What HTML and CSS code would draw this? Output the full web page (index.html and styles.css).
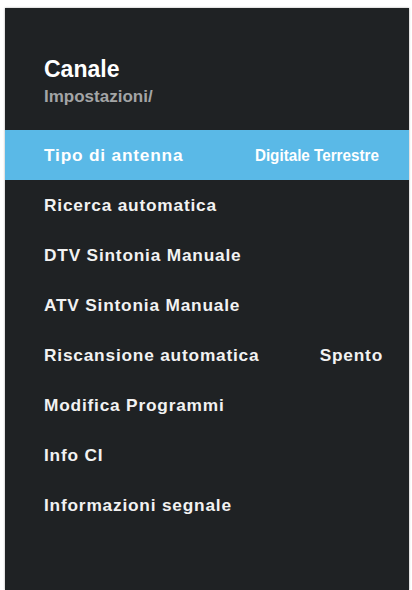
FILE: index.html
```html
<!DOCTYPE html>
<html lang="it">
<head>
    <meta charset="UTF-8">
    <meta name="viewport" content="width=device-width, initial-scale=1.0">
    <title>Canale</title>
    <link rel="stylesheet" href="styles.css">
</head>
<body>
    <div class="panel">
        <div class="header">
            <h1>Canale</h1>
            <div class="crumb">Impostazioni/</div>
        </div>

        <ul class="menu">
            <li class="item selected">
                <span class="label">Tipo di antenna</span>
                <span class="value narrow">Digitale Terrestre</span>
            </li>
            <li class="item"><span class="label">Ricerca automatica</span></li>
            <li class="item"><span class="label">DTV Sintonia Manuale</span></li>
            <li class="item"><span class="label">ATV Sintonia Manuale</span></li>
            <li class="item">
                <span class="label">Riscansione automatica</span>
                <span class="value">Spento</span>
            </li>
            <li class="item"><span class="label">Modifica Programmi</span></li>
            <li class="item"><span class="label">Info CI</span></li>
            <li class="item"><span class="label">Informazioni segnale</span></li>
        </ul>
    </div>
</body>
</html>
```

FILE: styles.css
```css
body {
    margin: 0;
    padding: 8px 3px 0 5px;
    background: #ffffff;
    font-family: "Liberation Sans", Arial, sans-serif;
    overflow: hidden;
}

.panel {
    height: calc(100vh - 8px);
    background: #1f2224;
    box-shadow: 0 0 2px rgba(0, 0, 0, 0.35);
    overflow: hidden;
}

.header {
    padding: 47px 39px 23px;
}

h1 {
    margin: 0;
    font-size: 23px;
    line-height: 28px;
    font-weight: bold;
    color: #ffffff;
}

.crumb {
    margin-top: 4px;
    font-size: 17px;
    line-height: 20px;
    font-weight: bold;
    color: #a3a5a6;
}

.menu {
    list-style: none;
    margin: 0;
    padding: 0;
}

.item {
    display: flex;
    justify-content: space-between;
    align-items: center;
    height: 50px;
    padding: 0 26px 0 39px;
    font-size: 17.3px;
    line-height: 20px;
    font-weight: bold;
    letter-spacing: 0.8px;
    color: #f2f2f2;
}

.item.selected {
    background: #5ab9e7;
    color: #ffffff;
}

.value {
    white-space: nowrap;
}

/* the antenna type is drawn in a condensed face */
.narrow {
    display: inline-block;
    margin-right: 4px;
    letter-spacing: 0;
    transform: scaleX(0.88);
    transform-origin: right center;
}
```
